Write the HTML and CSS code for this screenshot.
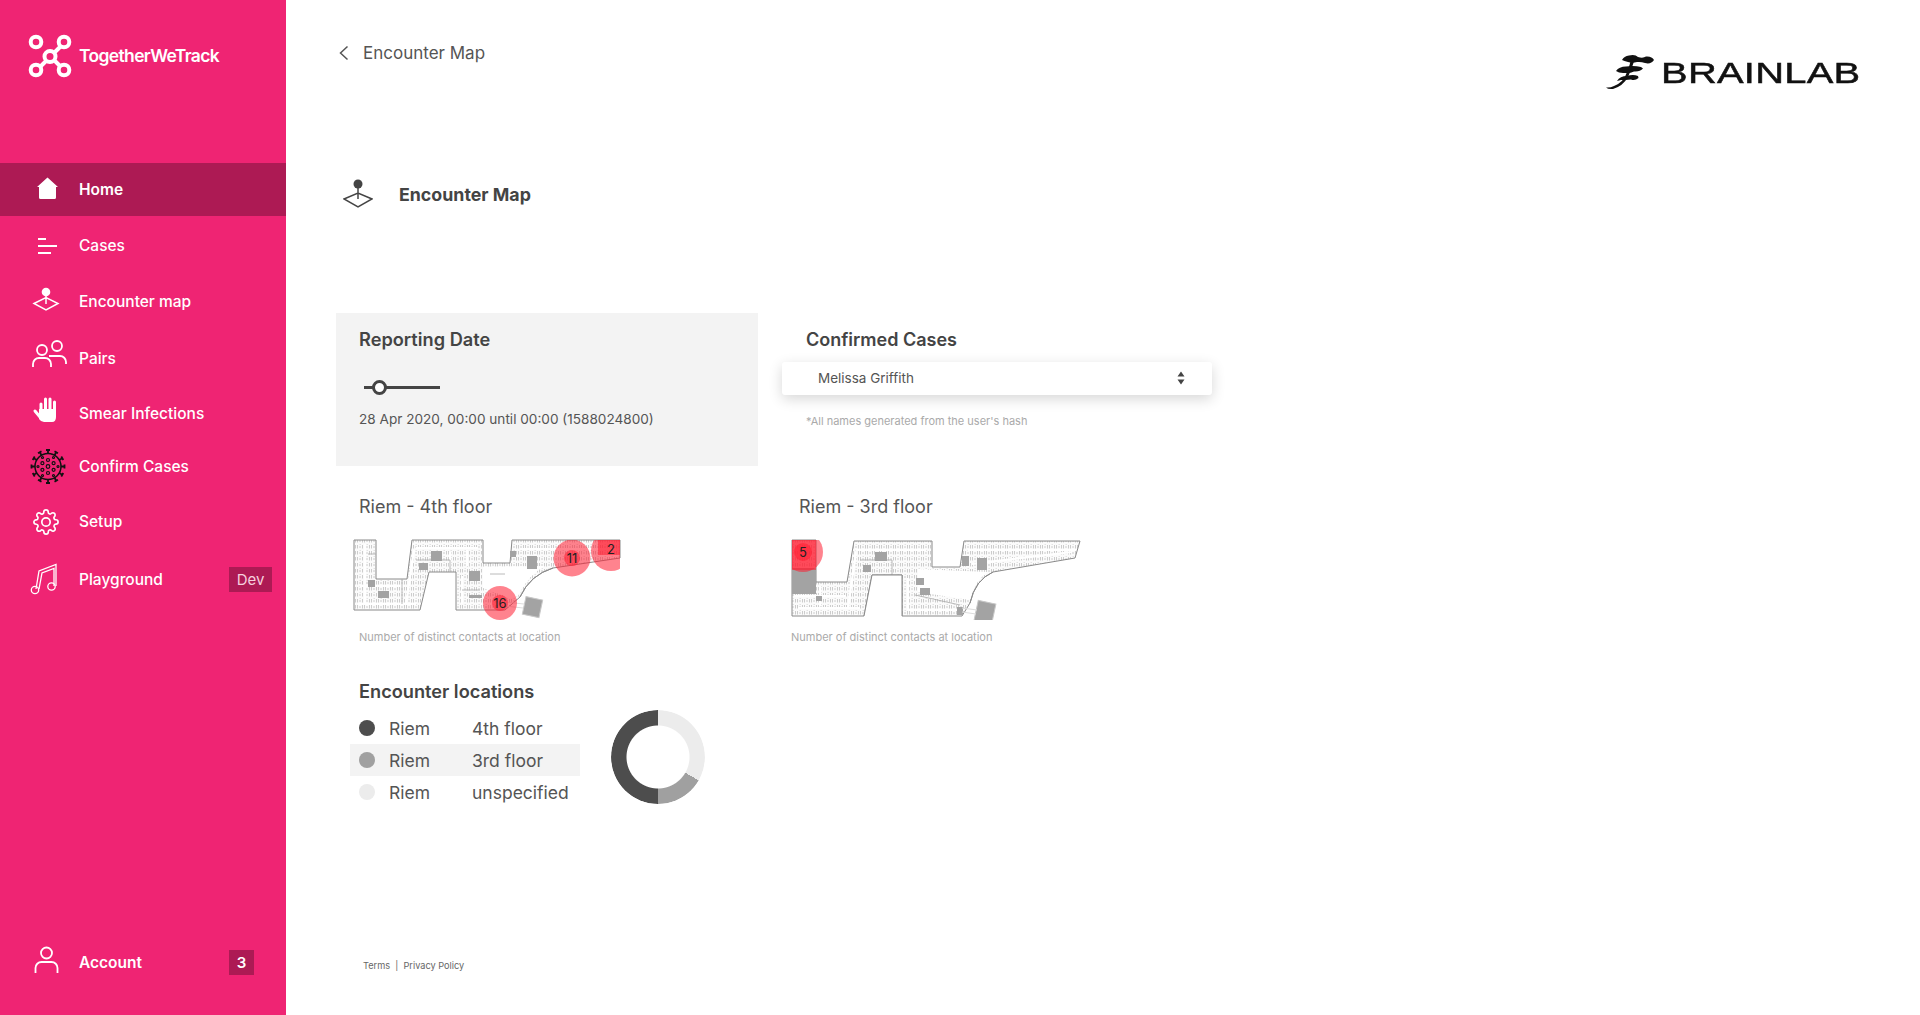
FILE: index.html
```html
<!DOCTYPE html>
<html lang="en">
<head>
<meta charset="utf-8">
<title>Encounter Map</title>
<link rel="stylesheet" href="styles.css">
</head>
<body>
<div class="app">
  <aside class="sidebar">
    <div class="logo">
      <svg class="logo-mark" viewBox="0 0 44 44" aria-hidden="true">
        <g fill="none" stroke="#fff" stroke-width="4">
          <path d="M27 18 L33 12 M18 27 L12 33 M27 27 L32 32"/>
          <circle cx="8" cy="8" r="5.300"/><circle cx="36" cy="8" r="5.300"/>
          <circle cx="22" cy="22.500" r="5.500"/>
          <circle cx="8" cy="36" r="5.300"/><circle cx="36" cy="36" r="5.300"/>
        </g>
      </svg>
      <span class="logo-text">TogetherWeTrack</span>
    </div>
    <nav class="nav">
      <a class="nav-item active">
        <svg class="nav-icon" viewBox="0 0 40 36"><path fill="#fff" d="M21.500 5.500 L32 15 H30 V25.500 a1.500 1.500 0 0 1-1.500 1.500 H14.500 a1.500 1.500 0 0 1-1.500-1.500 V15 H11 Z"/></svg>
        <span>Home</span>
      </a>
      <a class="nav-item">
        <svg class="nav-icon" viewBox="0 0 40 36"><path fill="none" stroke="#fff" stroke-width="2" d="M12 11 H20 M12 18 H31 M12 25 H25"/></svg>
        <span>Cases</span>
      </a>
      <a class="nav-item">
        <svg class="nav-icon" viewBox="0 0 40 36"><circle cx="20" cy="8" r="4.300" fill="#fff"/><path fill="none" stroke="#fff" stroke-width="1.500" d="M20 8 V20 M8 19.500 L20 13.500 L32 19.500 L20 26 Z"/></svg>
        <span>Encounter map</span>
      </a>
      <a class="nav-item">
        <svg class="nav-icon" viewBox="0 0 40 36"><g fill="none" stroke="#fff" stroke-width="1.800"><circle cx="16" cy="9" r="5"/><circle cx="31" cy="5" r="5"/><path d="M7 26 v-3 a6 6 0 0 1 6-6 h6 a6 6 0 0 1 6 6 v3"/><path d="M23 15 h11 a6 6 0 0 1 6 6 v2"/></g></svg>
        <span>Pairs</span>
      </a>
      <a class="nav-item">
        <svg class="nav-icon" viewBox="0 0 40 36"><g stroke="#fff" stroke-linecap="round" fill="none" stroke-width="3"><path d="M15 14 V8 M19.500 14 V3 M24 14 V3 M28.500 14 V6 M9 15 L14 21"/></g><path fill="#fff" d="M13 13 H30 V21 Q30 26 26 26 H18 Q15 26 13 23 Z"/></svg>
        <span>Smear Infections</span>
      </a>
      <a class="nav-item">
        <svg class="nav-icon" viewBox="0 0 40 36">
          <g fill="none" stroke="#111" stroke-width="1.500">
            <circle cx="22" cy="17.500" r="13"/>
            <g stroke-width="1.800">
              <path d="M22 4.500 V1 M20 1 H24"/>
              <path transform="rotate(30 22 17.500)" d="M22 4.500 V1 M20 1 H24"/>
              <path transform="rotate(60 22 17.500)" d="M22 4.500 V1 M20 1 H24"/>
              <path transform="rotate(90 22 17.500)" d="M22 4.500 V1 M20 1 H24"/>
              <path transform="rotate(120 22 17.500)" d="M22 4.500 V1 M20 1 H24"/>
              <path transform="rotate(150 22 17.500)" d="M22 4.500 V1 M20 1 H24"/>
              <path transform="rotate(180 22 17.500)" d="M22 4.500 V1 M20 1 H24"/>
              <path transform="rotate(210 22 17.500)" d="M22 4.500 V1 M20 1 H24"/>
              <path transform="rotate(240 22 17.500)" d="M22 4.500 V1 M20 1 H24"/>
              <path transform="rotate(270 22 17.500)" d="M22 4.500 V1 M20 1 H24"/>
              <path transform="rotate(300 22 17.500)" d="M22 4.500 V1 M20 1 H24"/>
              <path transform="rotate(330 22 17.500)" d="M22 4.500 V1 M20 1 H24"/>
            </g>
            <g stroke-width="1.200">
              <circle cx="22" cy="17.500" r="1.800"/>
              <circle cx="22" cy="11" r="1.500"/><circle cx="27.600" cy="14.200" r="1.500"/><circle cx="27.600" cy="20.800" r="1.500"/>
              <circle cx="22" cy="24" r="1.500"/><circle cx="16.400" cy="20.800" r="1.500"/><circle cx="16.400" cy="14.200" r="1.500"/>
              <circle cx="27.500" cy="8.500" r="1"/><circle cx="32" cy="17.500" r="1"/><circle cx="27.500" cy="26.500" r="1"/>
              <circle cx="16.500" cy="26.500" r="1"/><circle cx="12" cy="17.500" r="1"/><circle cx="16.500" cy="8.500" r="1"/>
            </g>
          </g>
        </svg>
        <span>Confirm Cases</span>
      </a>
      <a class="nav-item">
        <svg class="nav-icon" viewBox="0 0 40 36"><g fill="none" stroke="#fff" stroke-width="1.500" transform="translate(6.800 4.800) scale(1.100)"><circle cx="12" cy="12" r="3.800"/><path d="M19.400 15a1.650 1.650 0 0 0 .33 1.820l.06.06a2 2 0 0 1 0 2.830 2 2 0 0 1-2.830 0l-.06-.06a1.650 1.650 0 0 0-1.820-.33 1.650 1.650 0 0 0-1 1.510V21a2 2 0 0 1-2 2 2 2 0 0 1-2-2v-.09A1.650 1.650 0 0 0 9 19.400a1.650 1.650 0 0 0-1.820.33l-.06.06a2 2 0 0 1-2.830 0 2 2 0 0 1 0-2.830l.06-.06a1.650 1.650 0 0 0 .33-1.820 1.650 1.650 0 0 0-1.510-1H3a2 2 0 0 1-2-2 2 2 0 0 1 2-2h.09A1.650 1.650 0 0 0 4.600 9a1.650 1.650 0 0 0-.33-1.820l-.06-.06a2 2 0 0 1 0-2.830 2 2 0 0 1 2.830 0l.06.06a1.650 1.650 0 0 0 1.820.33H9a1.650 1.650 0 0 0 1-1.510V3a2 2 0 0 1 2-2 2 2 0 0 1 2 2v.09a1.650 1.650 0 0 0 1 1.510 1.650 1.650 0 0 0 1.820-.33l.06-.06a2 2 0 0 1 2.830 0 2 2 0 0 1 0 2.830l-.06.06a1.650 1.650 0 0 0-.33 1.820V9a1.650 1.650 0 0 0 1.510 1H21a2 2 0 0 1 2 2 2 2 0 0 1-2 2h-.09a1.650 1.650 0 0 0-1.510 1z"/></g></svg>
        <span>Setup</span>
      </a>
      <a class="nav-item">
        <svg class="nav-icon" viewBox="0 0 40 36"><g fill="none" stroke="#fff" stroke-width="1.300"><path d="M10 27 L13 9 L30 2.500 V24"/><path d="M13 27 L16 11 L28 6.500 V24"/><circle cx="9" cy="28" r="3.700"/><circle cx="25.500" cy="24.500" r="3.700"/></g></svg>
        <span>Playground</span>
        <span class="tag tag-dev">Dev</span>
      </a>
    </nav>
    <a class="nav-item account">
      <svg class="nav-icon" viewBox="0 0 40 36"><g fill="none" stroke="#fff" stroke-width="1.800"><circle cx="20.500" cy="9" r="5.500"/><path d="M9.500 29 v-5 a6 6 0 0 1 6-6 h10 a6 6 0 0 1 6 6 v5"/></g></svg>
      <span>Account</span>
      <span class="tag tag-count">3</span>
    </a>
  </aside>

  <main class="main">
    <header class="topbar">
      <a class="back">
        <svg class="back-icon" viewBox="0 0 12 16"><path fill="none" stroke="#555" stroke-width="1.500" d="M9.500 1.500 L2.500 8 L9.500 14.500"/></svg>
        <span>Encounter Map</span>
      </a>
      <div class="brand">
        <svg class="brand-mark" viewBox="0 0 50 40" aria-hidden="true">
          <g fill="#111">
            <path d="M17 7 Q19 3 24 2.500 Q30 1 33 4 Q38 5.500 41 3.500 Q47 3 49 7 Q46 11.500 40 10 Q36 8.500 32 9 Q27 10.500 23 9 Q19 8 17 7Z"/>
            <path d="M11 18 Q14 13.500 21 13.500 Q29 12.500 36 14 L38 15.500 Q35 19 29 18.500 Q25 20.500 20 20 Q14 20.500 11 18Z"/>
            <path d="M12 28 Q15 23 22 23 Q28 21 33 23 L33.500 25 Q30 28 26 26.500 Q20 27 16 27 Z"/>
            <path d="M26 6 Q25 12 22 19 Q19 29 9 33 Q5 35 1 34.500 Q3 36.500 8 36 Q18 33 23 24 Q27 15 29.500 7Z"/>
          </g>
        </svg>
        <span class="brand-box"><span class="brand-text">BRAINLAB</span></span>
      </div>
    </header>

    <div class="title-row">
      <svg class="title-icon" viewBox="0 0 30 34"><circle cx="15" cy="6" r="4.500" fill="#444"/><path fill="none" stroke="#444" stroke-width="1.500" d="M15 6 V21 M1 21 L15 15 L29 21 L15 29 Z"/></svg>
      <h1 class="title">Encounter Map</h1>
    </div>

    <section class="filters">
      <div class="panel">
        <h2 class="heading">Reporting Date</h2>
        <div class="slider"><span class="thumb"></span></div>
        <p class="date">28 Apr 2020, 00:00 until 00:00 (1588024800)</p>
      </div>
      <div class="cases">
        <h2 class="heading cases-heading">Confirmed Cases</h2>
        <div class="select">
          <span>Melissa Griffith</span>
          <svg class="select-arrows" viewBox="0 0 8 14"><path fill="#444" d="M4 0.500 L7.500 5.500 H0.500 Z M0.500 8.500 H7.500 L4 13.500 Z"/></svg>
        </div>
        <p class="note">*All names generated from the user's hash</p>
      </div>
    </section>

    <svg class="defs" aria-hidden="true">
      <defs>
        <pattern id="desks" width="7" height="6" patternUnits="userSpaceOnUse">
          <rect width="7" height="6" fill="#fbfbfb"/>
          <path fill="none" stroke="#c6c6c6" stroke-width="0.900" d="M1.500 1 V4.500 M3.500 1 V4.500 M5.500 0 H7 M5 3 H7"/>
        </pattern>
        <clipPath id="clip-four"><rect x="14" y="20" width="266" height="85"/></clipPath>
        <clipPath id="clip-three"><rect x="12" y="20" width="60" height="60"/></clipPath>
      </defs>
    </svg>

    <section class="maps">
      <div class="map">
        <h3 class="map-title">Riem - 4th floor</h3>
        <svg class="plan" viewBox="0 0 300 100">
          <path fill="url(#desks)" stroke="#8a8a8a" stroke-width="1" d="M14 20 H36 V59 H67 L72 20 H143 V43 H170 L172 20 H280 V38 L213 48 Q190 55 180 77 L165 90 H116 V52 H89 L80 90 H14 Z"/>
          <path fill="#fff" d="M143 47 L205 46 Q188 55 178 76 L170 78 L143 68 Z"/>
          <path fill="none" stroke="#fff" stroke-width="2.200" d="M25 24 V84 M20 66 H64 M76 28 H138 M74 30 L66 84 M18 84 H76 M110 32 V46 M127 30 V46 M122 56 V84 M180 29 H276"/>
          <path fill="none" stroke="#a8a8a8" stroke-width="0.800" d="M36 34 H28 M62 59 V84 M76 40 L110 40 M110 40 V52 M122 70 H140 M150 54 H165"/>
          <path fill="none" stroke="#8a8a8a" stroke-width="1" d="M213 48 Q190 55 180 77"/>
          <g fill="#a3a3a3">
            <rect x="91" y="31" width="11" height="10"/><rect x="79" y="43" width="9" height="7"/>
            <rect x="187" y="36" width="10" height="13"/><rect x="28" y="60" width="7" height="7"/>
            <rect x="38" y="71" width="11" height="7"/><rect x="129" y="51" width="11" height="10"/>
            <rect x="129" y="75" width="13" height="3"/><rect x="170" y="31" width="6" height="6"/>
          </g>
          <rect x="184" y="78" width="17" height="18" fill="#a3a3a3" stroke="#c8c8c8" transform="rotate(12 192 87)"/>
          <path fill="none" stroke="#ddd" d="M165 82 L184 84 M165 86 L183 88"/>
          <g class="heat" clip-path="url(#clip-four)">
            <circle cx="160" cy="83" r="17"/><circle cx="160" cy="83" r="8"/>
            <circle cx="232" cy="38" r="18.500"/><circle cx="232" cy="38" r="8"/>
            <circle cx="271" cy="31" r="20"/><rect x="258" y="20" width="22" height="15"/>
          </g>
          <text class="count" x="160" y="88">16</text>
          <text class="count" x="232" y="43">11</text>
          <text class="count" x="271" y="34">2</text>
        </svg>
        <p class="caption">Number of distinct contacts at location</p>
      </div>
      <div class="map map-right">
        <h3 class="map-title">Riem - 3rd floor</h3>
        <svg class="plan plan-wide" viewBox="0 0 310 100">
          <path fill="url(#desks)" stroke="#8a8a8a" stroke-width="1" d="M12 20 H36 V62 H67 L74 21 H152 V47 H180 L184 21 H300 L295 38 L213 52 Q195 60 190 83 L182 96 H122 V55 H92 L84 96 H12 Z"/>
          <path fill="#fff" d="M138 49 L208 52 Q195 60 190 80 L138 72 Z M92 55 H122 V96 H84 Z"/>
          <path fill="none" stroke="#fff" stroke-width="2.200" d="M14 76 H66 M18 88 H80 M76 30 H146 M76 32 L68 88 M40 66 V86 M128 58 V90 M128 90 H178 M188 30 H296 M192 44 L292 32"/>
          <path fill="none" stroke="#a8a8a8" stroke-width="0.800" d="M80 40 L112 40 M112 40 V55 M135 75 L180 85"/>
          <path fill="none" stroke="#8a8a8a" stroke-width="1" d="M213 52 Q195 60 190 83 M92 55 H122 V96 M92 55 L84 96"/>
          <g fill="#a3a3a3">
            <rect x="12" y="48" width="24" height="26"/><rect x="95" y="32" width="12" height="9"/><rect x="83" y="45" width="8" height="7"/>
            <rect x="182" y="36" width="7" height="10"/><rect x="197" y="38" width="10" height="12"/>
            <rect x="136" y="58" width="8" height="7"/><rect x="140" y="68" width="10" height="7"/>
            <rect x="36" y="76" width="6" height="5"/><rect x="177" y="87" width="6" height="8"/>
          </g>
          <rect x="196" y="82" width="18" height="21" fill="#a3a3a3" stroke="#c8c8c8" transform="rotate(12 205 92)"/>
          <path fill="none" stroke="#ddd" d="M182 88 L197 90 M182 92 L196 94"/>
          <g class="heat" clip-path="url(#clip-three)">
            <circle cx="23" cy="32" r="20"/><circle cx="23" cy="32" r="9"/><rect x="12" y="20" width="24" height="30"/>
          </g>
          <text class="count" x="23" y="37">5</text>
        </svg>
        <p class="caption">Number of distinct contacts at location</p>
      </div>
    </section>

    <section class="locations">
      <h2 class="heading loc-heading">Encounter locations</h2>
      <div class="loc-body">
        <ul class="legend">
          <li class="legend-row"><span class="dot dot-dark"></span><span class="place">Riem</span><span>4th floor</span></li>
          <li class="legend-row highlighted"><span class="dot dot-mid"></span><span class="place">Riem</span><span>3rd floor</span></li>
          <li class="legend-row"><span class="dot dot-light"></span><span class="place">Riem</span><span>unspecified</span></li>
        </ul>
        <div class="donut"></div>
      </div>
    </section>

    <footer class="footer">Terms&nbsp; |&nbsp; Privacy Policy</footer>
  </main>
</div>
</body>
</html>
```
FILE: styles.css
```css
* { box-sizing: border-box; }
html, body { margin: 0; padding: 0; height: 100%; }
body { font-family: Inter, "Liberation Sans", sans-serif; color: #444; background: #fff; overflow: hidden; }
h1, h2, h3, p, ul { margin: 0; padding: 0; }
ul { list-style: none; }

.app { display: flex; height: 1015px; }

.sidebar { width: 286px; flex: none; background: #ef2473; color: #fff; display: flex; flex-direction: column; padding-bottom: 33px; }
.logo { height: 163px; display: flex; align-items: flex-start; padding: 34px 0 0 28px; }
.logo-mark { width: 44px; height: 44px; flex: none; }
.logo-text { font-size: 17.500px; font-weight: 600; letter-spacing: -0.65px; margin: 11px 0 0 7px; line-height: 22px; }

.nav { display: flex; flex-direction: column; }
.nav-item { display: flex; align-items: center; height: 53px; font-size: 15.500px; font-weight: 500; color: #fff; }
.nav .nav-item:nth-child(2) { margin-top: 3px; }
.nav .nav-item:nth-child(3) { margin-top: 3px; }
.nav .nav-item:nth-child(4) { margin-top: 4px; }
.nav .nav-item:nth-child(5) { margin-top: 2px; }
.nav .nav-item:nth-child(6) { margin-top: 0; }
.nav .nav-item:nth-child(7) { margin-top: 2px; }
.nav .nav-item:nth-child(8) { margin-top: 5px; }
.nav-item.active { background: #ad1a54; font-weight: 600; }
.nav-icon { width: 40px; height: 36px; margin: 0 13px 0 26px; flex: none; overflow: visible; }
.tag { margin-left: auto; display: flex; align-items: center; justify-content: center; background: #ad1a54; }
.tag-dev { width: 43px; height: 25px; margin-right: 14px; font-size: 15px; font-weight: 400; color: #f6d0de; }
.account { margin-top: auto; height: 40px; font-weight: 600; }
.tag-count { width: 25px; height: 25px; margin-right: 32px; font-size: 15px; font-weight: 600; }

.main { flex: 1; min-width: 0; display: flex; flex-direction: column; padding: 0 59px 42px 50px; }

.topbar { height: 110px; display: flex; justify-content: space-between; align-items: flex-start; }
.back { display: flex; align-items: center; margin-top: 40px; height: 26px; font-size: 17px; color: #555; }
.back-icon { width: 12px; height: 16px; margin: 0 13px 0 2px; }
.brand { display: flex; margin-top: 53px; height: 40px; align-items: center; }
.brand-mark { width: 50px; height: 40px; }
.brand-box { display: block; width: 200px; margin-left: 6px; }
.brand-text { display: inline-block; font-family: "Liberation Sans", sans-serif; font-size: 30px; line-height: 40px; color: #111; letter-spacing: 0.2px; -webkit-text-stroke: 0.5px #111; transform: scaleX(1.330); transform-origin: left center; }

.title-row { display: flex; align-items: center; height: 34px; margin-top: 68px; padding-left: 7px; }
.title-icon { width: 30px; height: 34px; flex: none; }
.title { font-size: 17.800px; font-weight: 700; margin-left: 26px; color: #444; line-height: 34px; }

.filters { display: flex; margin-top: 101px; height: 153px; }
.panel { width: 422px; background: #f3f3f3; padding: 14px 23px 0; }
.heading { font-size: 18.200px; font-weight: 600; line-height: 24px; color: #444; }
.slider { position: relative; width: 76px; height: 3px; background: #444; margin: 35px 0 0 5px; }
.thumb { position: absolute; left: 8px; top: -6px; width: 15px; height: 15px; border-radius: 50%; background: #fff; border: 3px solid #444; }
.date { font-size: 13.600px; line-height: 20px; margin-top: 20px; color: #555; }

.cases { width: 430px; margin-left: 24px; }
.cases-heading { margin: 15px 0 0 24px; font-size: 18px; }
.select { display: flex; align-items: center; justify-content: space-between; height: 33px; margin-top: 10px; padding: 0 27px 2px 36px; background: #fff; border-radius: 3px; box-shadow: 0 4px 14px rgba(0, 0, 0, .16); font-size: 13.500px; color: #555; }
.select-arrows { width: 8px; height: 14px; }
.note { font-size: 11px; line-height: 16px; margin: 18px 0 0 24px; color: #aaa; }

.defs { width: 0; height: 0; position: absolute; }

.maps { display: grid; grid-template-columns: 440px 1fr; margin: 28px 0 0 4px; }
.map-title { font-size: 18px; font-weight: 400; line-height: 26px; color: #555; margin-left: 19px; }
.plan { display: block; width: 300px; height: 100px; }
.plan-wide { width: 310px; }
.caption { font-size: 11px; line-height: 14px; color: #aaa; margin: 10px 0 0 19px; }
.map-right .caption { margin-left: 11px; }
.heat circle, .heat rect { fill: rgba(255, 30, 50, .55); }
.count { font-size: 13px; text-anchor: middle; fill: #222; }

.locations { margin-top: 35px; }
.heading.loc-heading { margin-left: 23px; }
.loc-body { display: flex; margin-top: 9px; }
.legend { margin-left: 14px; width: 230px; }
.legend-row { display: grid; grid-template-columns: 16px 97px 1fr; align-items: center; height: 32px; padding-left: 9px; font-size: 17.500px; color: #555; }
.place { margin-left: 14px; }
.highlighted { background: #f3f3f3; }
.dot { width: 16px; height: 16px; border-radius: 50%; }
.dot-dark { background: #4d4d4d; }
.dot-mid { background: #a0a0a0; }
.dot-light { background: #ececec; }
.donut { width: 94px; height: 94px; margin: -2px 0 0 31px; border-radius: 50%; background: conic-gradient(#ececec 0 120deg, #a0a0a0 120deg 180deg, #4d4d4d 180deg 360deg); -webkit-mask: radial-gradient(circle, transparent 31px, #000 32px); mask: radial-gradient(circle, transparent 31px, #000 32px); }

.footer { margin: auto 0 0 27px; font-size: 9.200px; line-height: 14px; color: #666; }
```
